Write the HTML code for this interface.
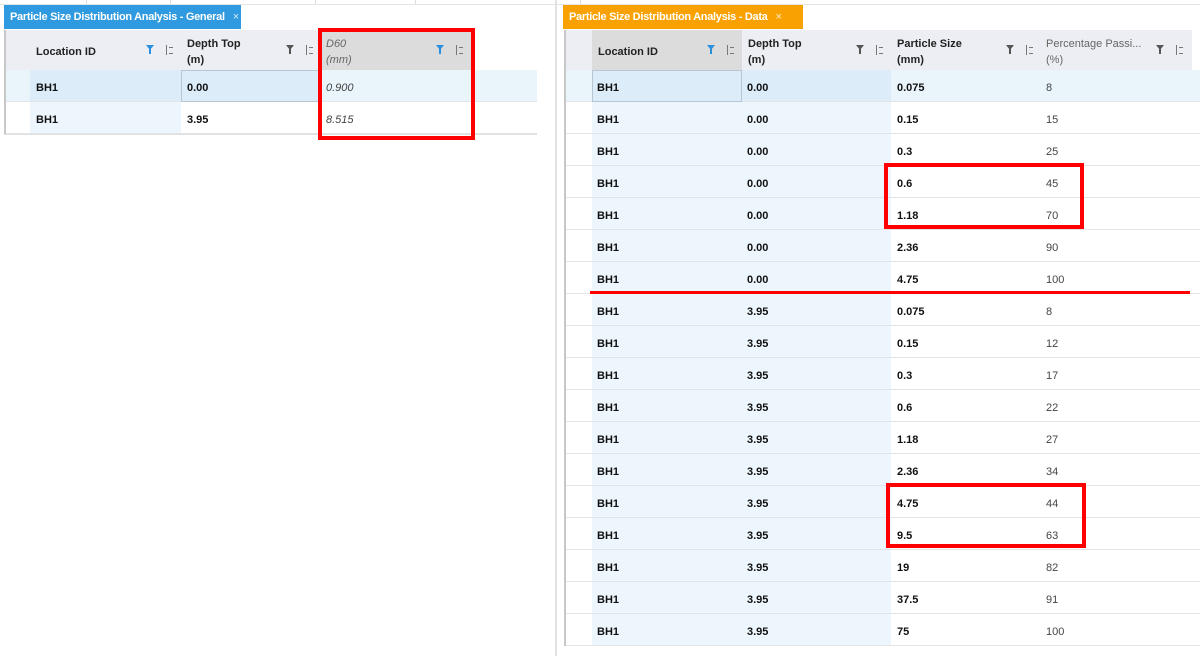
<!DOCTYPE html>
<html><head><meta charset="utf-8"><style>
*{margin:0;padding:0;box-sizing:border-box}
body{width:1200px;height:656px;background:#fff;position:relative;overflow:hidden;font-family:"Liberation Sans",sans-serif;font-size:11px;color:#111}
.a{position:absolute}
.tab{position:absolute;top:5px;height:24px;color:#fff;font-weight:bold;font-size:11px;line-height:24px;padding-left:6px;letter-spacing:-0.3px}
.tab span{font-weight:normal;margin-left:8px;opacity:.8}
.hd{position:absolute;top:30px;height:40px;background:#eceef3;font-weight:bold;font-size:11px;padding:6px 0 0 6px;line-height:16px;color:#222}
.hd.c{padding-top:14px}
.row{position:absolute;height:32px;border-bottom:1px solid #e2e4e8}
.cell{position:absolute;top:10px;font-weight:bold;font-size:11px}
.n{font-weight:normal;color:#444}
.red{position:absolute;border:4px solid #f00}
.fun{position:absolute;top:45px;width:0;height:0;border-left:4px solid transparent;border-right:4px solid transparent;border-top:5px solid #555}
.fun:after{content:"";position:absolute;left:-1px;top:-1px;width:2px;height:5px;background:#555}
.bl{border-top-color:#2a8fdc}
.bl:after{background:#2a8fdc}
.ln{position:absolute;top:45px;width:6px;height:10px;border-left:1px solid #777}
.ln:after{content:"";position:absolute;left:2px;top:2px;width:4px;height:5px;border-top:1px solid #777;border-bottom:1px solid #777}
</style></head><body>
<div class="a" style="left:0;top:4px;width:1200px;height:1px;background:#e4e4e4"></div>
<div class="a" style="left:86px;top:0;width:1px;height:4px;background:#ddd"></div>
<div class="a" style="left:170px;top:0;width:1px;height:4px;background:#ddd"></div>
<div class="a" style="left:315px;top:0;width:1px;height:4px;background:#ddd"></div>
<div class="a" style="left:415px;top:0;width:1px;height:4px;background:#ddd"></div>
<div class="a" style="left:580px;top:0;width:1px;height:4px;background:#ddd"></div>
<div class="tab" style="left:4px;width:237px;background:#2f9ae0">Particle Size Distribution Analysis - General<span>×</span></div>
<div class="a" style="left:555px;top:0;width:2px;height:656px;background:#e2e2e2"></div>
<div class="a" style="left:4px;top:30px;width:2px;height:104px;background:#c8c8c8"></div>
<div class="a" style="left:6px;top:30px;width:24px;height:40px;background:#eceef3"></div>
<div class="hd c" style="left:30px;width:151px">Location ID</div>
<div class="hd" style="left:181px;width:139px">Depth Top<br>(m)</div>
<div class="hd" style="left:320px;width:152px;background:#dcdcdd;font-weight:normal;font-style:italic;color:#666">D60<br>(mm)</div>
<div class="fun bl" style="left:146px"></div><div class="ln" style="left:166px"></div>
<div class="fun" style="left:286px"></div><div class="ln" style="left:306px"></div>
<div class="fun bl" style="left:436px"></div><div class="ln" style="left:456px"></div>
<div class="row" style="left:6px;top:70px;width:531px;background:#e9f4fb"></div>
<div class="a" style="left:30px;top:70px;width:290px;height:31px;background:#dcedf9"></div>
<div class="a" style="left:181px;top:70px;width:139px;height:32px;border:1px solid #b8c6d4"></div>
<div class="cell" style="left:36px;top:82px">BH1</div>
<div class="cell" style="left:187px;top:82px">0.00</div>
<div class="cell n" style="left:326px;top:82px;font-style:italic">0.900</div>
<div class="row" style="left:6px;top:102px;width:531px;background:#fff"></div>
<div class="a" style="left:30px;top:102px;width:151px;height:31px;background:#eef6fd"></div>
<div class="cell" style="left:36px;top:114px">BH1</div>
<div class="cell" style="left:187px;top:114px">3.95</div>
<div class="cell n" style="left:326px;top:114px;font-style:italic">8.515</div>
<div class="a" style="left:4px;top:134px;width:533px;height:1px;background:#e0e0e0"></div>
<div class="red" style="left:318px;top:28px;width:157px;height:112px"></div>
<div class="tab" style="left:563px;width:240px;background:#f8a100">Particle Size Distribution Analysis - Data<span>×</span></div>
<div class="a" style="left:564px;top:30px;width:2px;height:616px;background:#c8c8c8"></div>
<div class="a" style="left:566px;top:30px;width:26px;height:40px;background:#eceef3"></div>
<div class="hd c" style="left:592px;width:150px;background:#dcdcdd">Location ID</div>
<div class="hd" style="left:742px;width:149px">Depth Top<br>(m)</div>
<div class="hd" style="left:891px;width:149px">Particle Size<br>(mm)</div>
<div class="hd" style="left:1040px;width:152px;font-weight:normal;color:#666">Percentage Passi...<br>(%)</div>
<div class="fun bl" style="left:707px"></div><div class="ln" style="left:727px"></div>
<div class="fun" style="left:856px"></div><div class="ln" style="left:876px"></div>
<div class="fun" style="left:1006px"></div><div class="ln" style="left:1026px"></div>
<div class="fun" style="left:1156px"></div><div class="ln" style="left:1176px"></div>
<div id="rows"></div>
<script>
var d=[["0.00","0.075","8"],["0.00","0.15","15"],["0.00","0.3","25"],["0.00","0.6","45"],["0.00","1.18","70"],["0.00","2.36","90"],["0.00","4.75","100"],["3.95","0.075","8"],["3.95","0.15","12"],["3.95","0.3","17"],["3.95","0.6","22"],["3.95","1.18","27"],["3.95","2.36","34"],["3.95","4.75","44"],["3.95","9.5","63"],["3.95","19","82"],["3.95","37.5","91"],["3.95","75","100"]];
var h="";
for(var i=0;i<18;i++){var y=70+i*32;var f=i==0;
h+='<div class="row" style="left:566px;top:'+y+'px;width:634px;background:'+(f?'#e9f4fb':'#fff')+'"></div>';
h+='<div class="a" style="left:592px;top:'+y+'px;width:299px;height:31px;background:'+(f?'#dcedf9':'#eef6fd')+'"></div>';
if(f)h+='<div class="a" style="left:592px;top:70px;width:150px;height:32px;border:1px solid #b8c6d4"></div>';
var t=y+12;
h+='<div class="cell" style="left:597px;top:'+t+'px">BH1</div><div class="cell" style="left:747px;top:'+t+'px">'+d[i][0]+'</div><div class="cell" style="left:897px;top:'+t+'px">'+d[i][1]+'</div><div class="cell n" style="left:1046px;top:'+t+'px">'+d[i][2]+'</div>';}
document.getElementById("rows").innerHTML=h;
</script>
<div class="red" style="left:884px;top:163px;width:200px;height:66px"></div>
<div class="red" style="left:886px;top:483px;width:200px;height:65px"></div>
<div class="a" style="left:590px;top:291px;width:600px;height:3px;background:#f00"></div>
</body></html>
